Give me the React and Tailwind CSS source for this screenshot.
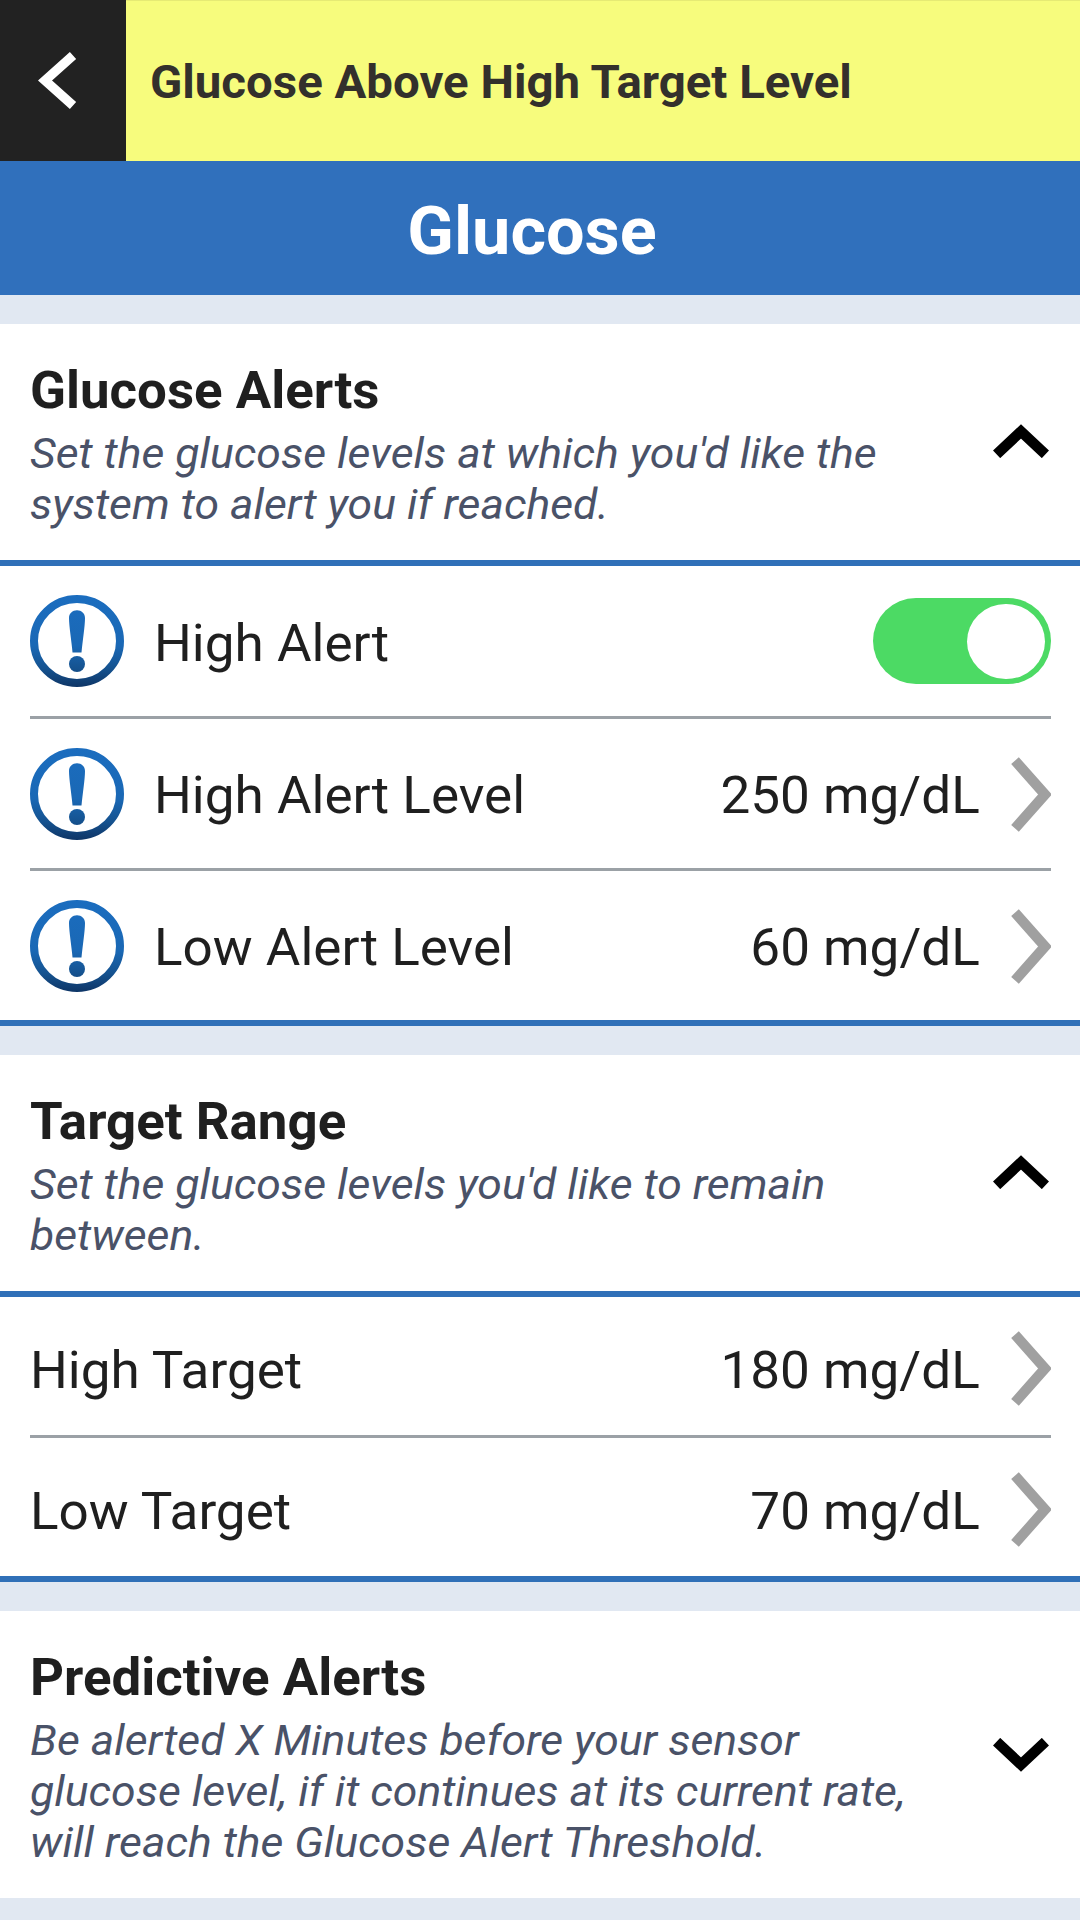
const Alert = () => (
  <svg className="w-[94px] h-[92px] shrink-0" viewBox="0 0 94 92" fill="none">
    <defs>
      <linearGradient id="ring" gradientUnits="userSpaceOnUse" x1="0" y1="0" x2="0" y2="92">
        <stop offset="0" stopColor="#1b6dbf" />
        <stop offset="0.55" stopColor="#1a68b5" />
        <stop offset="0.8" stopColor="#15528f" />
        <stop offset="1" stopColor="#0e3566" />
      </linearGradient>
    </defs>
    <ellipse cx="47" cy="46" rx="43" ry="42" stroke="url(#ring)" strokeWidth="8" />
    <path d="M39 23C39 18.500 42.500 15.300 47 15.300S55 18.500 55 23C55 31 52.500 46 51.500 57.500H42.500C41.500 46 39 31 39 23Z" fill="url(#ring)" />
    <circle cx="47" cy="69" r="8" fill="url(#ring)" />
  </svg>
);

const Arrow = () => (
  <svg className="w-[40px] h-[75px] ml-[31px] mt-px shrink-0" viewBox="0 0 40 75" fill="none">
    <path d="M4 3.600L34 37.500L4 71.400" stroke="#a0a0a0" strokeWidth="10.200" />
  </svg>
);

const Caret = ({ down }) => (
  <svg
    className={down ? "w-[56px] h-[34px] rotate-180" : "w-[56px] h-[34px] mb-[3px]"}
    viewBox="0 0 56 34"
    fill="none"
  >
    <path d="M3.600 30.300L28 7.500L52.400 30.300" stroke="#000" strokeWidth="10.500" />
  </svg>
);

const Head = ({ title, lines, down, className }) => (
  <div className={"flex items-center justify-between bg-white pl-[29.5px] pr-[31px] " + className}>
    <div className="self-start pt-[37px] origin-left scale-x-[1.03]">
      <h2 className="text-[51.3px] leading-[60px] font-bold text-[#1f1f1f]">{title}</h2>
      <div className="mt-[7px] text-[43.2px] leading-[51px] italic text-[#4a5268]">
        {lines.map((l) => (
          <p key={l} className="whitespace-nowrap">{l}</p>
        ))}
      </div>
    </div>
    <Caret down={down} />
  </div>
);

const Row = ({ icon, label, value, className, children }) => (
  <div className={"flex items-center mx-[29.5px] text-[51.5px] leading-[60px] text-[#1f1f1f] " + className}>
    {icon && <div className="mr-[30px]"><Alert /></div>}
    <span className="pt-[5px] whitespace-nowrap origin-left scale-x-[1.03]">{label}</span>
    <span className="ml-auto pt-[5px] whitespace-nowrap origin-right scale-x-[1.03]">{value}</span>
    {children || <Arrow />}
  </div>
);

export default function App() {
  return (
    <div className="w-[1080px] h-[1920px] overflow-hidden bg-[#e1e8f2] font-['Roboto',sans-serif]">
      <header className="flex h-[161px] bg-[#f7fc7d]">
        <div className="flex w-[126px] items-center bg-[#222] pl-[38px]">
          <svg className="w-[39px] h-[57px]" viewBox="0 0 39 57" fill="none">
            <path d="M35 3.500L7 28.500L35 53.500" stroke="#fff" strokeWidth="9.400" />
          </svg>
        </div>
        <div className="flex grow items-center border-t border-[#e6ea74] pl-[24px] pt-[3px] text-[46px] font-bold text-[#33302c]">
          <span className="origin-left scale-x-[1.03]">Glucose Above High Target Level</span>
        </div>
      </header>
      <h1 className="flex h-[134px] items-center justify-center bg-[#3070bc] pr-[16px] pt-[7px] text-[66.4px] font-bold text-white">
        <span className="scale-x-[1.03]">Glucose</span>
      </h1>
      <section className="mt-[29px] bg-white border-b-[6px] border-[#3070b8]">
        <Head
          title="Glucose Alerts"
          lines={["Set the glucose levels at which you'd like the", "system to alert you if reached."]}
          className="h-[242px] border-b-[6px] border-[#3070b8]"
        />
        <Row icon label="High Alert" className="h-[153px] border-b-[3px] border-[#9ba1a6]">
          <div className="flex h-[86px] w-[177.5px] items-center justify-end rounded-full bg-[#4cda64] pr-[6px]">
            <div className="h-[75px] w-[77.5px] rounded-[50%] bg-white" />
          </div>
        </Row>
        <Row icon label="High Alert Level" value="250 mg/dL" className="h-[152px] border-b-[3px] border-[#9ba1a6]" />
        <Row icon label="Low Alert Level" value="60 mg/dL" className="h-[149px]" />
      </section>
      <section className="mt-[29px] bg-white border-b-[6px] border-[#3070b8]">
        <Head
          title="Target Range"
          lines={["Set the glucose levels you'd like to remain", "between."]}
          className="h-[242px] border-b-[6px] border-[#3070b8]"
        />
        <Row label="High Target" value="180 mg/dL" className="h-[141px] border-b-[3px] border-[#9ba1a6] pt-[4px]" />
        <Row label="Low Target" value="70 mg/dL" className="h-[138px] pt-[4px]" />
      </section>
      <Head
        down
        title="Predictive Alerts"
        lines={[
          "Be alerted X Minutes before your sensor",
          "glucose level, if it continues at its current rate,",
          "will reach the Glucose Alert Threshold.",
        ]}
        className="mt-[29px] h-[287px]"
      />
    </div>
  );
}
